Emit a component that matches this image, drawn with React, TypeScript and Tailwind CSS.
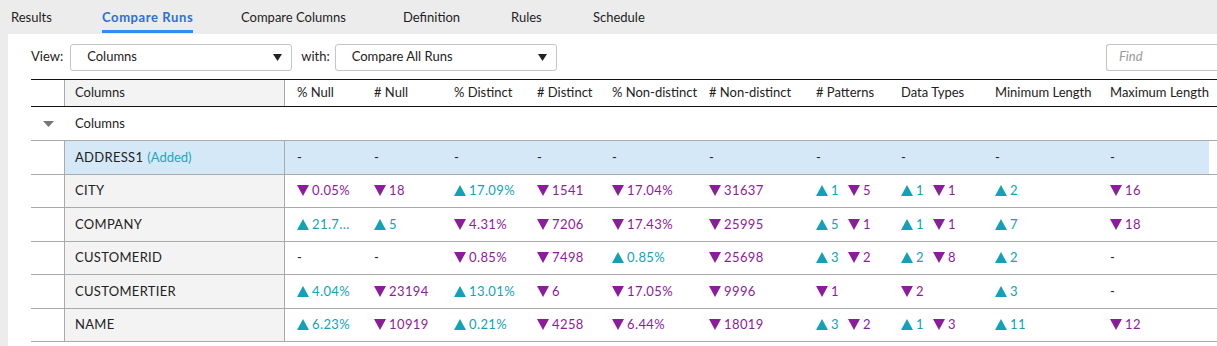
import React from "react";

type Delta = { dir: "up" | "down"; v: string };
type Cell = "-" | Delta[];

const UP = "#12a2b7";
const DOWN = "#8b1c9c";

const widths = [77, 80, 83, 75, 97, 107, 85, 94, 115, 111];
const headers = [
  "% Null",
  "# Null",
  "% Distinct",
  "# Distinct",
  "% Non-distinct",
  "# Non-distinct",
  "# Patterns",
  "Data Types",
  "Minimum Length",
  "Maximum Length",
];

const u = (v: string): Delta => ({ dir: "up", v });
const d = (v: string): Delta => ({ dir: "down", v });

const rows: { name: string; added?: boolean; cells: Cell[] }[] = [
  { name: "ADDRESS1", added: true, cells: ["-", "-", "-", "-", "-", "-", "-", "-", "-", "-"] },
  {
    name: "CITY",
    cells: [[d("0.05%")], [d("18")], [u("17.09%")], [d("1541")], [d("17.04%")], [d("31637")], [u("1"), d("5")], [u("1"), d("1")], [u("2")], [d("16")]],
  },
  {
    name: "COMPANY",
    cells: [[u("21.7...")], [u("5")], [d("4.31%")], [d("7206")], [d("17.43%")], [d("25995")], [u("5"), d("1")], [u("1"), d("1")], [u("7")], [d("18")]],
  },
  {
    name: "CUSTOMERID",
    cells: ["-", "-", [d("0.85%")], [d("7498")], [u("0.85%")], [d("25698")], [u("3"), d("2")], [u("2"), d("8")], [u("2")], "-"],
  },
  {
    name: "CUSTOMERTIER",
    cells: [[u("4.04%")], [d("23194")], [u("13.01%")], [d("6")], [d("17.05%")], [d("9996")], [d("1")], [d("2")], [u("3")], "-"],
  },
  {
    name: "NAME",
    cells: [[u("6.23%")], [d("10919")], [u("0.21%")], [d("4258")], [d("6.44%")], [d("18019")], [u("3"), d("2")], [u("1"), d("3")], [u("11")], [d("12")]],
  },
];

const Tri: React.FC<{ dir: "up" | "down" }> = ({ dir }) => (
  <svg width="12" height="11" viewBox="0 0 12 11" className="shrink-0">
    {dir === "up" ? (
      <polygon points="6,0 12,11 0,11" fill={UP} />
    ) : (
      <polygon points="0,0 12,0 6,11" fill={DOWN} />
    )}
  </svg>
);

const Value: React.FC<{ cell: Cell }> = ({ cell }) => {
  if (cell === "-") return <span className="text-[#222]">-</span>;
  return (
    <span className="flex items-center gap-[9px]">
      {cell.map((c, i) => (
        <span
          key={i}
          className="flex items-center gap-[3px]"
          style={{ color: c.dir === "up" ? UP : DOWN }}
        >
          <Tri dir={c.dir} />
          <span className="tracking-[0.4px]">{c.v}</span>
        </span>
      ))}
    </span>
  );
};

const Select: React.FC<{ label: string }> = ({ label }) => (
  <div className="flex h-[27px] w-[222px] items-center justify-between rounded-[3px] border border-[#c4c4c4] bg-white pl-4 pr-[9px]">
    <span>{label}</span>
    <svg width="9" height="7" viewBox="0 0 9 7">
      <polygon points="0,0 9,0 4.5,7" fill="#222" />
    </svg>
  </div>
);

export default function App() {
  const tabs = ["Results", "Compare Runs", "Compare Columns", "Definition", "Rules", "Schedule"];
  const tabX = ["w-[91px]", "w-[139px]", "w-[162px]", "w-[108px]", "w-[82px]", "w-auto"];

  return (
    <div
      className="flex h-[346px] w-[1217px] flex-col overflow-hidden bg-[#ececec] text-[13px] text-[#222]"
      style={{ fontFamily: "Lato, 'Noto Sans', sans-serif" }}
    >
      {/* tabs */}
      <div className="flex h-[34px] shrink-0 pl-[11px]">
        {tabs.map((t, i) => (
          <div key={t} className={`${tabX[i]} flex h-full`}>
            <div
              className={`flex h-full flex-col justify-between pt-[8px] ${
                i === 1 ? "ml-[-2px] px-[2px]" : ""
              }`}
            >
              <span
                className={
                  i === 1
                    ? "font-bold tracking-[0.6px] text-[#2d6fd8]"
                    : "text-[#1e1e1e]"
                }
              >
                {t}
              </span>
              {i === 1 && <div className="mb-[1px] h-[3px] bg-[#2f8cf3]" />}
            </div>
          </div>
        ))}
      </div>

      {/* panel */}
      <div className="ml-[8px] flex flex-1 flex-col bg-white">
        <div className="flex h-[45px] items-center pl-[23px] pt-[1px]">
          <span className="mr-[7px]">View:</span>
          <Select label="Columns" />
          <span className="ml-[9px] mr-[5px]">with:</span>
          <Select label="Compare All Runs" />
          <div className="ml-auto flex h-[27px] w-[111px] items-center rounded-l-[3px] border border-r-0 border-[#c4c4c4] pl-[12px] italic text-[#9a9a9a]">
            Find
          </div>
        </div>

        {/* table */}
        <div className="ml-[23px] flex flex-col">
          {/* header */}
          <div className="flex h-[28px] border-y border-[#111]">
            <div className="w-[33px] shrink-0" />
            <div className="flex w-[221px] shrink-0 items-center border-x border-[#aaa] bg-[#f3f3f3] pl-[10px]">
              Columns
            </div>
            {headers.map((h, i) => (
              <div
                key={h}
                className="flex shrink-0 items-center whitespace-nowrap pl-[12px]"
                style={{ width: widths[i] }}
              >
                {h}
              </div>
            ))}
          </div>

          {/* group row */}
          <div className="flex h-[34px] items-center border-b border-[#aaa]">
            <div className="flex w-[33px] shrink-0 justify-center pl-[2px]">
              <svg width="11" height="6" viewBox="0 0 11 6">
                <polygon points="0,0 11,0 5.5,6" fill="#777" />
              </svg>
            </div>
            <span className="pl-[11px]">Columns</span>
          </div>

          {rows.map((r) => (
            <div key={r.name} className="flex h-[33.5px] border-b border-[#aaa]">
              <div className="w-[33px] shrink-0" />
              <div
                className={`flex w-[221px] shrink-0 items-center border-x border-[#aaa] pl-[10px] ${
                  r.added ? "bg-[#d5e8f8]" : "bg-[#f3f3f3]"
                }`}
              >
                <span className="tracking-[0.3px]">{r.name}</span>
                {r.added && <span className="ml-[4px] text-[#22a6b8]">(Added)</span>}
              </div>
              {r.cells.map((c, i) => (
                <div
                  key={i}
                  className={`flex shrink-0 items-center whitespace-nowrap pl-[12px] ${
                    r.added ? "bg-[#d5e8f8]" : ""
                  }`}
                  style={{ width: widths[i] }}
                >
                  <Value cell={c} />
                </div>
              ))}
              <div className="flex-1" />
            </div>
          ))}
        </div>
      </div>
    </div>
  );
}
